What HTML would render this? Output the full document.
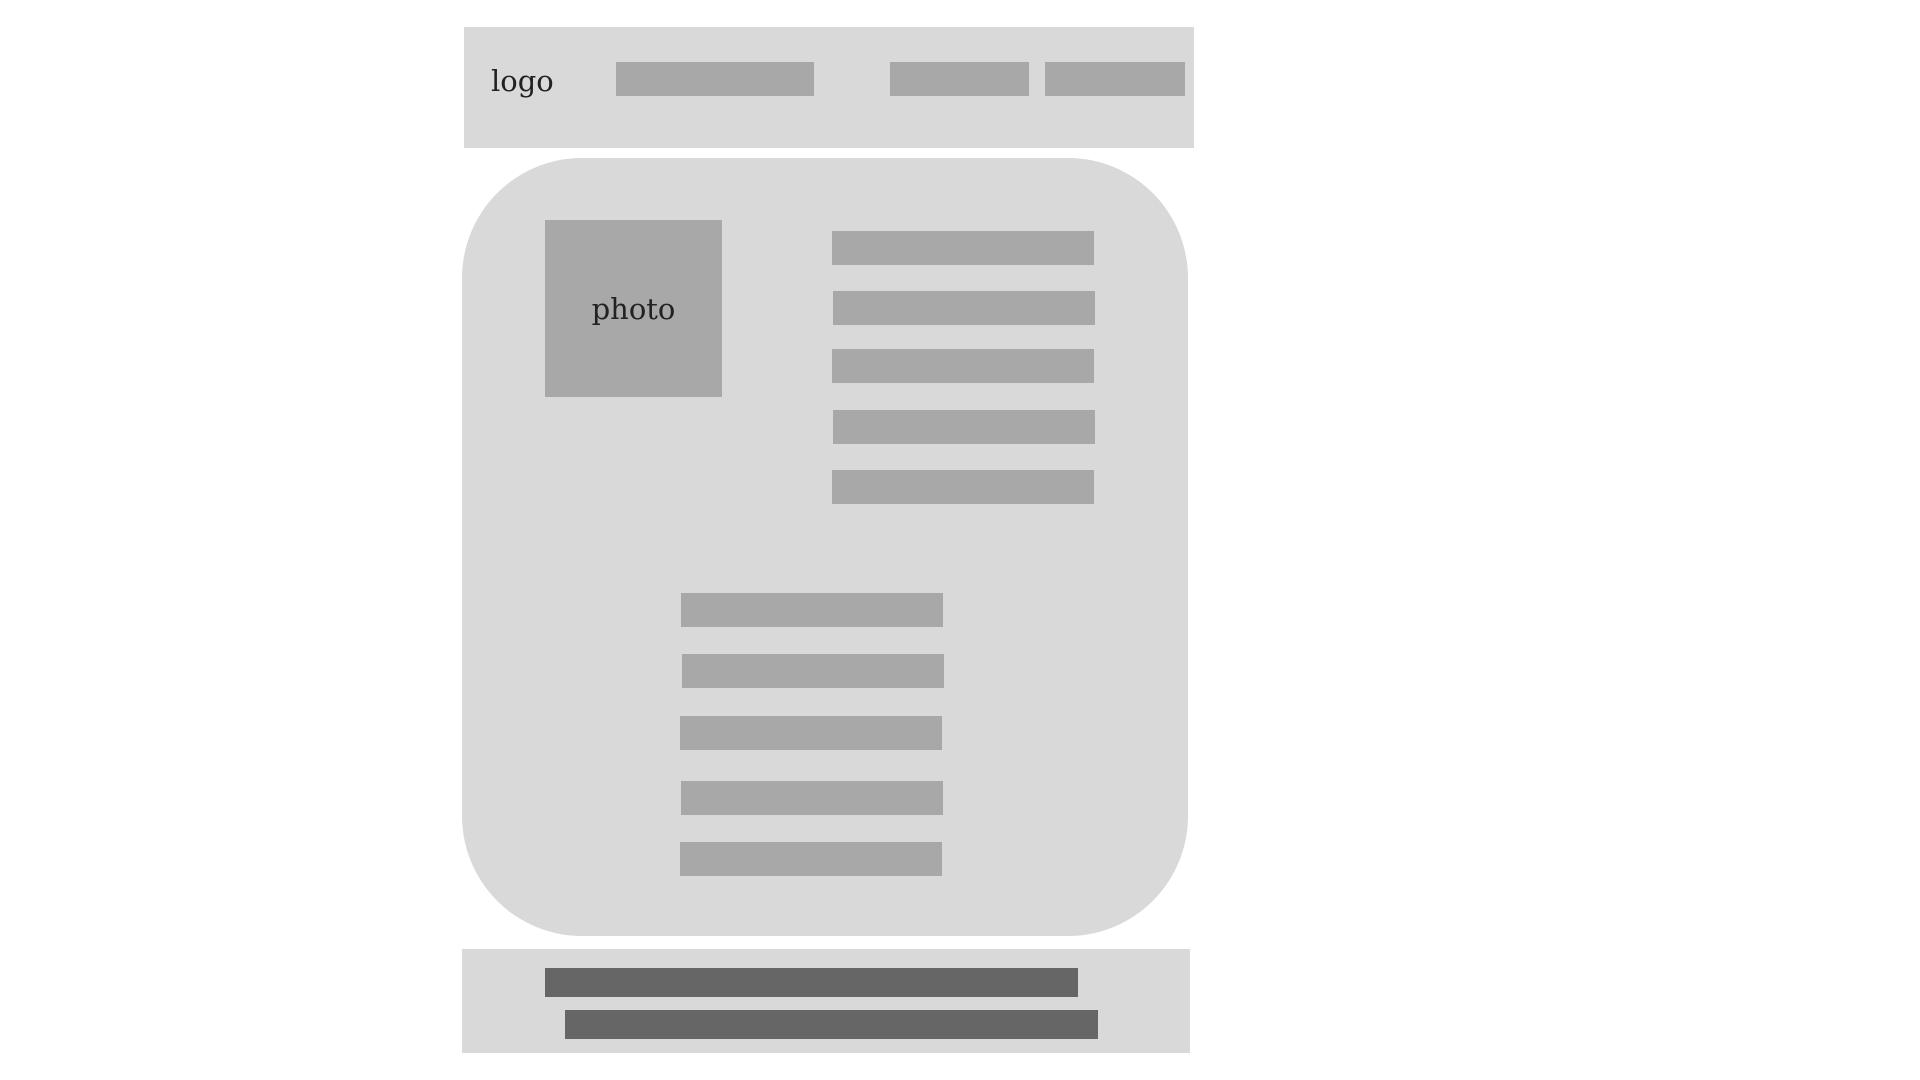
<!DOCTYPE html>
<html><head><style>
body{margin:0;width:1920px;height:1080px;background:#fff;position:relative;overflow:hidden;font-family:"DejaVu Serif","Liberation Serif",serif}
div{position:absolute}
.l{background:#d9d9d9}
.b{background:#a8a8a8}
.d{background:#666}
</style></head><body>
<div class="l" style="left:464px;top:27px;width:730px;height:121px"></div>
<div style="left:491px;top:64px;font-size:29px;color:#222">logo</div>
<div class="b" style="left:616px;top:62px;width:198px;height:34px"></div>
<div class="b" style="left:890px;top:62px;width:139px;height:34px"></div>
<div class="b" style="left:1045px;top:62px;width:140px;height:34px"></div>
<div class="l" style="left:462px;top:158px;width:726px;height:778px;border-radius:120px"></div>
<div class="b" style="left:545px;top:220px;width:177px;height:177px;display:flex;align-items:center;justify-content:center;font-size:29px;color:#222">photo</div>
<div class="b" style="left:832px;top:231px;width:262px;height:34px"></div>
<div class="b" style="left:833px;top:291px;width:262px;height:34px"></div>
<div class="b" style="left:832px;top:349px;width:262px;height:34px"></div>
<div class="b" style="left:833px;top:410px;width:262px;height:34px"></div>
<div class="b" style="left:832px;top:470px;width:262px;height:34px"></div>
<div class="b" style="left:681px;top:593px;width:262px;height:34px"></div>
<div class="b" style="left:682px;top:654px;width:262px;height:34px"></div>
<div class="b" style="left:680px;top:716px;width:262px;height:34px"></div>
<div class="b" style="left:681px;top:781px;width:262px;height:34px"></div>
<div class="b" style="left:680px;top:842px;width:262px;height:34px"></div>
<div class="l" style="left:462px;top:949px;width:728px;height:104px"></div>
<div class="d" style="left:545px;top:968px;width:533px;height:29px"></div>
<div class="d" style="left:565px;top:1010px;width:533px;height:29px"></div>
</body></html>
